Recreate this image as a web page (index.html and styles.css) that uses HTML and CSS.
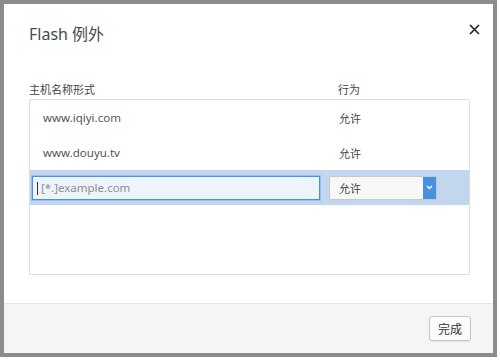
FILE: index.html
```html
<!DOCTYPE html>
<html>

<head>
    <meta charset="utf-8">
    <title>Flash 例外</title>
    <link rel="stylesheet" href="styles.css">
</head>

<body>
    <div class="dialog">
        <a class="close" href="javascript:void(0)">
            <svg width="11" height="11" viewBox="0 0 11 11">
                <path d="M1 1L10 10M10 1L1 10" stroke="#222" stroke-width="1.6" fill="none" />
            </svg>
        </a>
        <div class="main">
            <h1 class="title">Flash 例外</h1>
            <div class="heads">
                <span>主机名称形式</span>
                <span>行为</span>
            </div>
            <ul class="list">
                <li>
                    <span class="host">www.iqiyi.com</span>
                    <span class="act">允许</span>
                </li>
                <li>
                    <span class="host">www.douyu.tv</span>
                    <span class="act">允许</span>
                </li>
                <li class="current">
                    <div class="cell">
                        <i class="caret"></i>
                        <input class="pattern" type="text" placeholder="[*.]example.com">
                    </div>
                    <div class="select">
                        <span>允许</span>
                        <i class="arrow">
                            <svg width="7" height="5" viewBox="0 0 7 5">
                                <path d="M1 1L3.5 3.5L6 1" stroke="#fff" stroke-width="1.3" fill="none" />
                            </svg>
                        </i>
                    </div>
                </li>
            </ul>
        </div>
        <div class="footer">
            <button class="btn" type="button">完成</button>
        </div>
    </div>
</body>

</html>
```

FILE: styles.css
```css
* {
    padding: 0;
    margin: 0;
    box-sizing: border-box;
}

ul {
    list-style: none;
}

a {
    text-decoration: none;
}

html,
body {
    width: 100%;
    height: 100%;
    background-color: #fff;
}

body {
    font-family: "Noto Sans", "Noto Sans CJK SC", sans-serif;
    font-size: 12px;
    color: #444;
}

.dialog {
    position: relative;
    width: 497px;
    height: 357px;
    border: 4px solid #8c8c8c;
    background-color: #fff;
    display: flex;
    flex-direction: column;
}

.close {
    position: absolute;
    top: 20px;
    right: 13px;
    width: 11px;
    height: 11px;
    display: flex;
}

.main {
    flex: 1;
    padding: 18px 23px 0 25px;
}

.title {
    height: 24px;
    line-height: 24px;
    font-size: 16px;
    font-weight: 400;
    color: #4a4a4a;
}

.heads {
    display: grid;
    grid-template-columns: 309px 1fr;
    margin-top: 36px;
    height: 17px;
    line-height: 16px;
    font-size: 11px;
    color: #444;
}

.list {
    height: 176px;
    border: 1px solid #dcdcdc;
    border-radius: 2px;
}

.list li {
    display: grid;
    grid-template-columns: 299px 1fr;
    align-items: center;
    height: 35px;
}

.list .host {
    padding-left: 13px;
    font-size: 11.5px;
    color: #555;
}

.list .act {
    padding-left: 10px;
    font-size: 11px;
    color: #444;
}

.list li.current {
    background-color: #c3d6ef;
}

.cell {
    position: relative;
    padding-left: 2px;
}

.caret {
    position: absolute;
    left: 7px;
    top: 6px;
    width: 1px;
    height: 13px;
    background-color: #333;
}

.pattern {
    display: block;
    width: 288px;
    height: 24px;
    padding: 0 8px;
    border: 1px solid #4d8fe4;
    box-shadow: 0 0 0 1px rgba(77, 143, 228, .35);
    background-color: #eef4fc;
    font-family: inherit;
    font-size: 11.5px;
    color: #333;
    outline: none;
}

.pattern::placeholder {
    color: #8f8f8f;
}

.select {
    display: flex;
    align-items: center;
    justify-content: space-between;
    width: 108px;
    height: 24px;
    border: 1px solid #c9c9c9;
    background-color: #f8f8f8;
    font-size: 11px;
    color: #444;
}

.select span {
    padding-left: 9px;
}

.select .arrow {
    display: flex;
    align-items: center;
    justify-content: center;
    width: 13px;
    height: 100%;
    background-color: #4a90e2;
}

.footer {
    display: flex;
    justify-content: flex-end;
    height: 50px;
    padding: 12px 22px 0 0;
    border-top: 1px solid #e3e3e3;
    background-color: #f5f5f5;
}

.btn {
    width: 42px;
    height: 25px;
    border: 1px solid #c6c6c6;
    border-radius: 3px;
    background-color: #fbfbfb;
    box-shadow: 0 1px 1px rgba(0, 0, 0, .06);
    font-family: inherit;
    font-size: 12px;
    color: #333;
}
```
